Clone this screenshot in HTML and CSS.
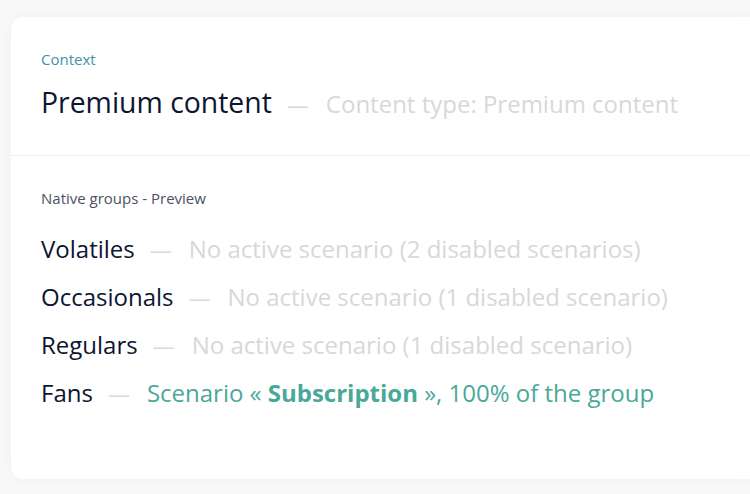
FILE: index.html
```html
<!DOCTYPE html>
<html>
<head>
<meta charset="utf-8">
<link rel="stylesheet" href="styles.css">
</head>
<body>
<div class="card">
  <section class="header">
    <div class="label context">Context</div>
    <div class="title-row">
      <span class="title">Premium content</span>
      <span class="dash">—</span>
      <span class="muted">Content type: Premium content</span>
    </div>
  </section>
  <section class="groups">
    <div class="label sub">Native groups - Preview</div>
    <ul class="group-list">
      <li class="row"><span class="name">Volatiles</span><span class="dash">—</span><span class="muted">No active scenario (2 disabled scenarios)</span></li>
      <li class="row"><span class="name">Occasionals</span><span class="dash">—</span><span class="muted">No active scenario (1 disabled scenario)</span></li>
      <li class="row"><span class="name">Regulars</span><span class="dash">—</span><span class="muted">No active scenario (1 disabled scenario)</span></li>
      <li class="row"><span class="name">Fans</span><span class="dash">—</span><span class="active">Scenario « <b>Subscription</b> », 100% of the group</span></li>
    </ul>
  </section>
</div>
</body>
</html>
```
FILE: styles.css
```css
html, body {
  margin: 0;
  padding: 0;
}
body {
  background: #f8f8f8;
  font-family: "Open Sans", "Noto Sans", sans-serif;
  width: 750px;
  height: 494px;
  overflow: hidden;
}
.card {
  margin: 17px 0 0 11px;
  width: 739px;
  height: 462px;
  background: #ffffff;
  border-radius: 12px 0 0 12px;
  box-shadow: 0 0 12px rgba(0, 0, 0, 0.035);
  overflow: hidden;
}
.header {
  padding: 32px 30px 33px;
  border-bottom: 1px solid #f1f1f1;
}
.label {
  font-size: 15px;
  line-height: 20px;
}
.context {
  color: #3f93ad;
}
.sub {
  color: #4a5263;
}
.title-row {
  margin-top: 15px;
  display: flex;
  align-items: baseline;
  line-height: 36px;
  white-space: nowrap;
}
.title {
  font-size: 28.4px;
  color: #0d1530;
}
.dash {
  color: #d9d9d9;
  margin: 0 17px 0 15px;
  font-size: 22px;
}
.muted {
  color: #d8d8d8;
  font-size: 24px;
}
.groups {
  padding: 32px 30px 0;
}
.group-list {
  list-style: none;
  margin: 17px 0 0;
  padding: 0;
}
.row {
  display: flex;
  align-items: baseline;
  height: 48px;
  line-height: 48px;
  white-space: nowrap;
}
.name {
  font-size: 24px;
  color: #0d1530;
}
.active {
  font-size: 24px;
  color: #4aa89a;
}
.active b {
  font-weight: 700;
}
```
